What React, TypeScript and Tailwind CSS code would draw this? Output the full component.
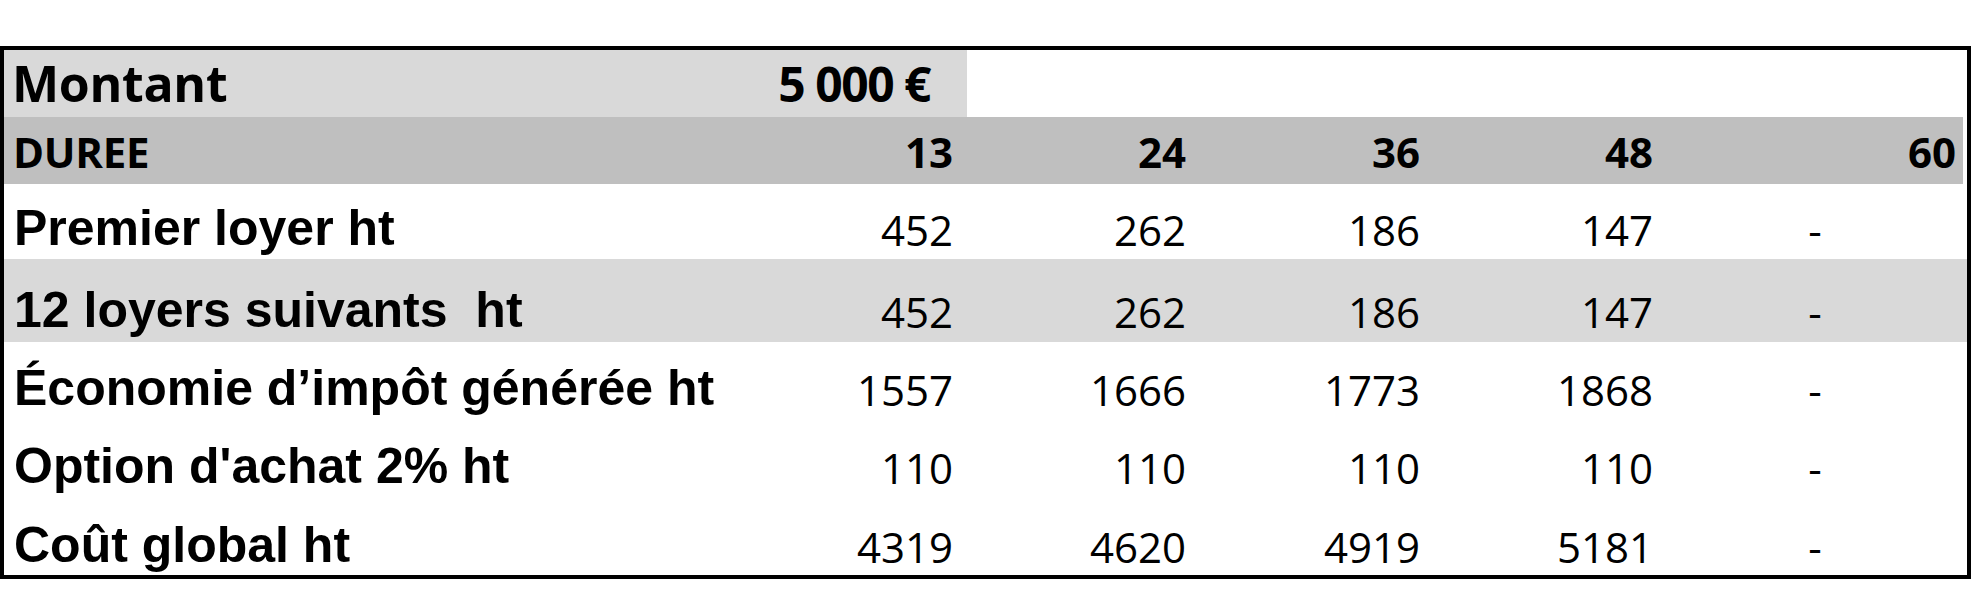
import React from "react";

type Row = {
  label: string;
  values: string[];
  height: string;
  shaded?: boolean;
  pbLabel: string;
  pbNum: string;
};

const rows: Row[] = [
  { label: "Premier loyer ht", values: ["452", "262", "186", "147"], height: "h-[75px]", pbLabel: "pb-[6px]", pbNum: "pb-[8px]" },
  { label: "12 loyers suivants\u00a0 ht", values: ["452", "262", "186", "147"], height: "h-[83px]", shaded: true, pbLabel: "pb-[7px]", pbNum: "pb-[9px]" },
  { label: "Économie d’impôt générée ht", values: ["1557", "1666", "1773", "1868"], height: "h-[78px]", pbLabel: "pb-[7px]", pbNum: "pb-[9px]" },
  { label: "Option d'achat 2% ht", values: ["110", "110", "110", "110"], height: "h-[78px]", pbLabel: "pb-[7px]", pbNum: "pb-[9px]" },
  { label: "Coût global ht", values: ["4319", "4620", "4919", "5181"], height: "h-[77px]", pbLabel: "pb-[5px]", pbNum: "pb-[7px]" },
];

const durees = ["13", "24", "36", "48"];

// label | 13 | 24 | 36 | 48 | 60
const grid = "grid grid-cols-[730px_233px_233px_234px_233px_1fr]";
const arial = "font-['Arial','Liberation_Sans',sans-serif]";
const open = "font-['Open_Sans',sans-serif]";

const App: React.FC = () => {
  return (
    <div className="w-[1971px] h-[615px] bg-white pt-[46px]">
      <div className="border-[4px] border-black w-[1971px] text-black">
        {/* Montant */}
        <div className={`${grid} h-[67px] ${open} font-bold leading-none`}>
          <div className="bg-[#d9d9d9] flex items-end pl-[8px] pb-[9px] text-[50px] tracking-[-0.3px]">
            Montant
          </div>
          <div className="bg-[#d9d9d9] flex items-end justify-end pr-[37px] pb-[9px] text-[48px] tracking-[-1.5px]">
            5&nbsp;000&nbsp;€
          </div>
          <div className="col-span-4 bg-white"></div>
        </div>

        {/* DUREE */}
        <div className={`${grid} h-[67px] bg-[#bfbfbf] mr-[4px] ${open} font-bold leading-none text-[42px]`}>
          <div className="flex items-end pl-[9px] pb-[11px] tracking-[-0.3px]">DUREE</div>
          {durees.map((d) => (
            <div key={d} className="flex items-end justify-end pr-[14px] pb-[11px]">
              {d}
            </div>
          ))}
          <div className="flex items-end justify-end pr-[7px] pb-[11px]">60</div>
        </div>

        {rows.map((r) => (
          <div key={r.label} className={`${grid} ${r.height} ${r.shaded ? "bg-[#d9d9d9]" : "bg-white"} leading-none`}>
            <div className={`flex items-end pl-[10px] ${r.pbLabel} ${arial} font-bold text-[50px] tracking-[0px] whitespace-nowrap`}>
              {r.label}
            </div>
            {r.values.map((v, i) => (
              <div key={i} className={`flex items-end justify-end pr-[14px] ${r.pbNum} ${open} text-[42px]`}>
                {v}
              </div>
            ))}
            <div className={`flex items-end justify-center pr-[4px] ${r.pbNum} ${open} text-[42px]`}>-</div>
          </div>
        ))}
      </div>
    </div>
  );
};

export default App;
